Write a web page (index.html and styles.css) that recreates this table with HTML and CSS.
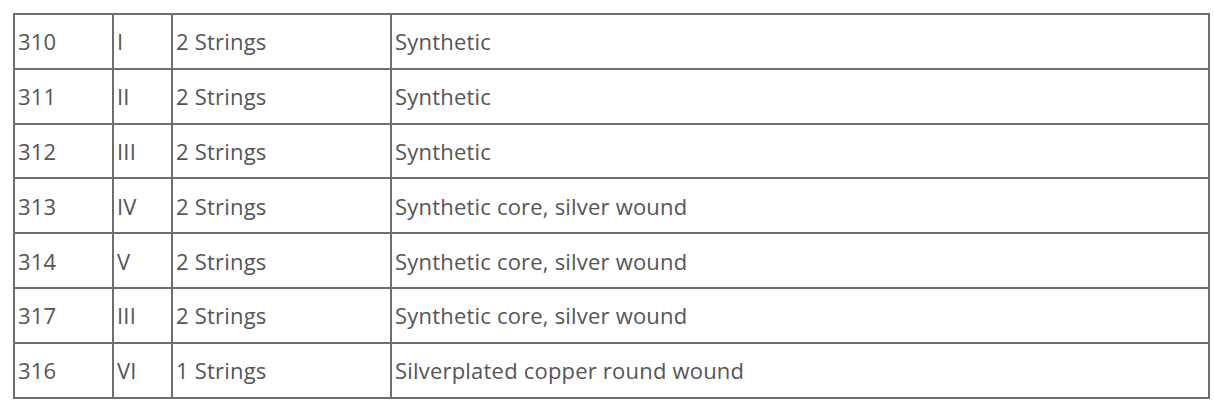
FILE: index.html
```html
<!DOCTYPE html>
<html lang="en">
<head>
<meta charset="utf-8">
<title>Strings</title>
<link rel="stylesheet" href="styles.css">
</head>
<body>
<table class="spec">
  <colgroup>
    <col class="c-num">
    <col class="c-pos">
    <col class="c-count">
    <col class="c-mat">
  </colgroup>
  <tbody>
    <tr><td>310</td><td>I</td><td>2 Strings</td><td>Synthetic</td></tr>
    <tr><td>311</td><td>II</td><td>2 Strings</td><td>Synthetic</td></tr>
    <tr><td>312</td><td>III</td><td>2 Strings</td><td>Synthetic</td></tr>
    <tr><td>313</td><td>IV</td><td>2 Strings</td><td>Synthetic core, silver wound</td></tr>
    <tr><td>314</td><td>V</td><td>2 Strings</td><td>Synthetic core, silver wound</td></tr>
    <tr><td>317</td><td>III</td><td>2 Strings</td><td>Synthetic core, silver wound</td></tr>
    <tr><td>316</td><td>VI</td><td>1 Strings</td><td>Silverplated copper round wound</td></tr>
  </tbody>
</table>
</body>
</html>
```
FILE: styles.css
```css
html, body {
  margin: 0;
  padding: 0;
  background: #ffffff;
}
body {
  padding: 13px 0 0 13px;
  font-family: "Open Sans", "DejaVu Sans", sans-serif;
}
.spec {
  border-collapse: collapse;
  table-layout: fixed;
  width: 1195px;
  color: #555555;
  font-size: 22px;
  letter-spacing: 0.2px;
}
.c-num { width: 99px; }
.c-pos { width: 59px; }
.c-count { width: 219px; }
.c-mat { width: 818px; }
.spec td {
  border: 2px solid #6e6e6e;
  height: 52.8px;
  padding: 0 3px;
  vertical-align: middle;
  text-align: left;
  white-space: nowrap;
  line-height: 1;
}
```
